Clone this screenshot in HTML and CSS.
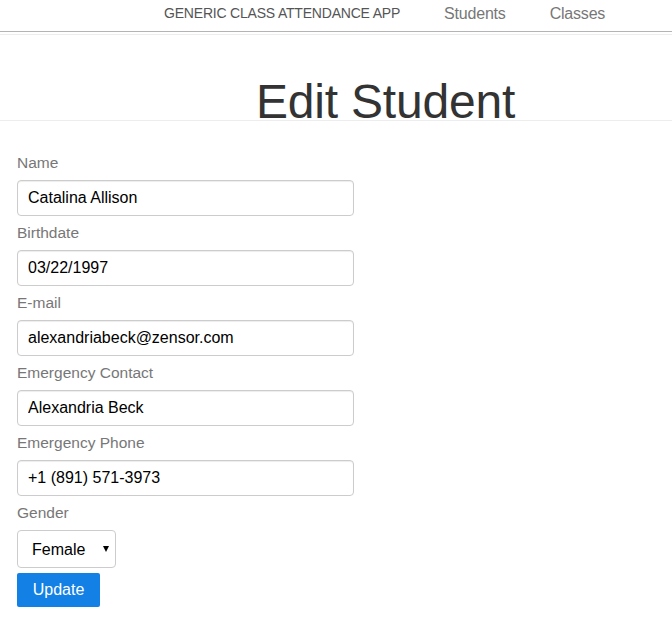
FILE: index.html
```html
<!DOCTYPE html>
<html>
<head>
<meta charset="utf-8">
<title>Edit Student</title>
<link rel="stylesheet" href="styles.css">
</head>
<body>
<nav class="topnav">
  <span class="brand">GENERIC CLASS ATTENDANCE APP</span>
  <a class="navlink">Students</a>
  <a class="navlink">Classes</a>
</nav>
<header class="page-header">
  <h1 class="title">Edit Student</h1>
</header>
<form class="form">
  <label class="lbl">Name</label>
  <input class="field" type="text" value="Catalina Allison">
  <label class="lbl">Birthdate</label>
  <input class="field" type="text" value="03/22/1997">
  <label class="lbl">E-mail</label>
  <input class="field" type="text" value="alexandriabeck@zensor.com">
  <label class="lbl">Emergency Contact</label>
  <input class="field" type="text" value="Alexandria Beck">
  <label class="lbl">Emergency Phone</label>
  <input class="field" type="text" value="+1 (891) 571-3973">
  <label class="lbl">Gender</label>
  <span class="select-wrap">
    <select class="select">
      <option>Female</option>
      <option>Male</option>
    </select>
  </span>
  <button class="btn" type="button">Update</button>
</form>
</body>
</html>
```
FILE: styles.css
```css
html, body {
  margin: 0;
  padding: 0;
  background: #fff;
  font-family: "Liberation Sans", Arial, sans-serif;
}
.topnav {
  height: 31px;
  border-bottom: 1px solid #b4b4b4;
  display: flex;
  align-items: center;
  padding-left: 164px;
  gap: 44px;
  box-sizing: content-box;
}
.brand {
  font-size: 14px;
  color: #555;
  letter-spacing: -0.2px;
  margin-top: -6px;
}
.navlink {
  font-size: 16px;
  color: #777;
  margin-top: -4px;
  letter-spacing: -0.2px;
}
.page-header {
  margin-top: 2px;
  border-top: 1px solid #ededed;
  border-bottom: 1px solid #ededed;
  height: 85px;
}
.title {
  margin: 0;
  padding: 43px 0 0 256px;
  font-size: 48px;
  line-height: 48px;
  font-weight: normal;
  color: #333;
  letter-spacing: -0.2px;
}
.form {
  display: flex;
  flex-direction: column;
  align-items: flex-start;
  padding: 25px 0 0 17px;
  margin: 0;
}
.lbl {
  display: block;
  height: 34px;
  line-height: 34px;
  font-size: 15.5px;
  color: #777;
}
.field {
  box-sizing: border-box;
  width: 337px;
  height: 36px;
  margin: 0;
  padding: 0 10px;
  border: 1px solid #ccc;
  border-radius: 4px;
  box-shadow: inset 0 1px 1px rgba(0,0,0,0.075);
  font-family: "Liberation Sans", Arial, sans-serif;
  font-size: 16px;
  color: #000;
  outline: none;
}
.select-wrap {
  position: relative;
  display: block;
}
.select-wrap::after {
  content: "";
  position: absolute;
  left: 86px;
  top: 16px;
  border-left: 3.5px solid transparent;
  border-right: 3.5px solid transparent;
  border-top: 6px solid #000;
}
.select {
  box-sizing: border-box;
  width: 99px;
  height: 38px;
  margin: 0;
  padding: 0 0 0 14px;
  border: 1px solid #ccc;
  border-radius: 4px;
  background: #fff;
  -webkit-appearance: none;
  appearance: none;
  font-family: "Liberation Sans", Arial, sans-serif;
  font-size: 16px;
  color: #000;
  outline: none;
}
.btn {
  margin-top: 5px;
  height: 34px;
  width: 83px;
  padding: 0;
  border: none;
  border-radius: 2px;
  background: #1380e6;
  color: #fff;
  font-family: "Liberation Sans", Arial, sans-serif;
  font-size: 16px;
}
```
